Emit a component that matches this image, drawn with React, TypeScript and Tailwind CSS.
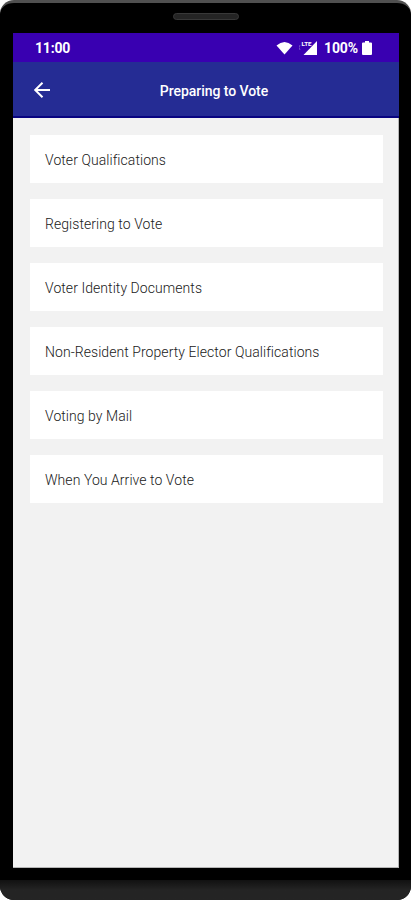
import React from 'react';

const topics = [
    'Voter Qualifications',
    'Registering to Vote',
    'Voter Identity Documents',
    'Non-Resident Property Elector Qualifications',
    'Voting by Mail',
    'When You Arrive to Vote',
];

function StatusBar() {
    return (
        <div className="flex h-[29px] shrink-0 items-center justify-between bg-[#3900b1] pl-[22px] pr-[27px] text-white">
            <span className="text-[14px] font-bold leading-none tracking-[-0.2px]">11:00</span>
            <div className="flex items-center">
                <svg className="h-[14px] w-[17px]" viewBox="0 0 17 14" fill="currentColor">
                    <path d="M.5 4.500Q8.500-2.500 16.500 4.500L8.500 13.600Z" />
                </svg>
                <svg className="ml-[6px] h-[14px] w-[19px]" viewBox="0 0 19 14" fill="currentColor">
                    <path d="M18 0V14H4.500Z" />
                    <text x="2.500" y="5" fontSize="5.500" fontWeight="700" textLength="10" lengthAdjust="spacingAndGlyphs">LTE</text>
                    <path d="M1 4L0 6.500L1 9" fill="none" stroke="currentColor" opacity=".3" />
                </svg>
                <span className="ml-[6px] text-[14px] font-bold leading-none tracking-[-0.1px]">100%</span>
                <svg className="ml-[4px] h-[14px] w-[10px]" viewBox="0 0 10 14" fill="currentColor">
                    <path d="M3 0H7V1.500H9Q10 1.500 10 2.500V13Q10 14 9 14H1Q0 14 0 13V2.500Q0 1.500 1 1.500H3Z" />
                </svg>
            </div>
        </div>
    );
}

function Header() {
    return (
        <header className="grid h-[56px] shrink-0 grid-cols-[60px_1fr_60px] items-center border-b-2 border-[#090581] bg-[#252c94] text-white">
            <button className="pl-[20px] pt-[2px]" aria-label="Back">
                <svg className="h-[18px] w-[18px]" viewBox="0 0 18 18" fill="none" stroke="currentColor" strokeWidth="2">
                    <path d="M17 9H2M9.500 1.700L2.200 9L9.500 16.300" />
                </svg>
            </button>
            <h1 className="pl-[16px] pt-[4px] text-center text-[14px] font-medium tracking-[-0.05px]">Preparing to Vote</h1>
        </header>
    );
}

export default function App() {
    return (
        <div className="h-[900px] w-[411px] bg-white font-[Roboto,sans-serif]">
            <div className="flex h-full flex-col overflow-hidden rounded-[14px] border-t-3 border-[#505050] bg-black">
                <div className="flex h-[30px] shrink-0 justify-center pt-[10px]">
                    <div className="h-[7px] w-[66px] rounded-full border border-[#383838] bg-[#242424]" />
                </div>
                <div className="mx-[13px] flex h-[835px] w-[386px] shrink-0 flex-col bg-[#f2f2f2]">
                    <StatusBar />
                    <Header />
                    <main className="flex flex-1 flex-col gap-[16px] border-r border-b border-[#b5b5b5] pl-[17px] pr-[15px] pt-[17px]">
                        {topics.map((topic) => (
                            <div key={topic} className="flex h-[48px] items-center bg-white pl-[15px] pt-[2px] text-[14px] font-light tracking-[0.06px] text-[#202020]">
                                {topic}
                            </div>
                        ))}
                    </main>
                </div>
                <div className="mt-[12px] flex-1 bg-linear-to-b from-[#111111] via-[#242424] to-[#242424]" />
            </div>
        </div>
    );
}
